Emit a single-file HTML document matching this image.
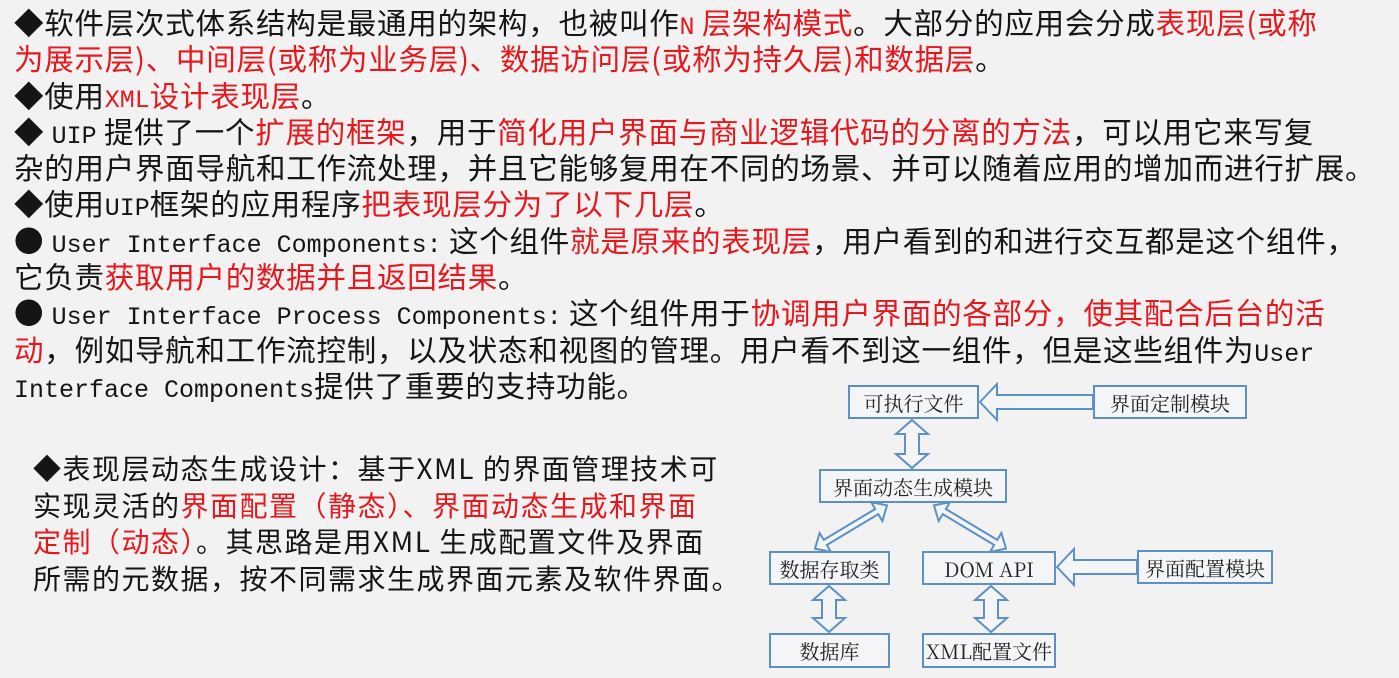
<!DOCTYPE html>
<html><head><meta charset="utf-8"><style>
body{margin:0;width:1399px;height:678px;background:#f2f2f2;overflow:hidden;position:relative;font-family:"Noto Sans CJK SC","WenQuanYi Zen Hei",sans-serif;color:#151515}
.t{position:absolute;left:14px;top:4px;font-size:29.5px;line-height:36.3px;white-space:nowrap;letter-spacing:0.75px}
.t div{height:36.3px}
.r{color:#e5181e}
.m{font-family:"Liberation Mono",monospace;font-size:25px;letter-spacing:0}
.p{position:absolute;left:33px;top:450px;font-size:28px;line-height:36.6px;white-space:nowrap;letter-spacing:1.5px}
.p div{height:36.6px}
.b{position:absolute;border:2px solid #5d90c6;box-sizing:border-box;font-family:"Noto Serif CJK SC","Liberation Serif",serif;font-size:20px;color:#222;display:flex;align-items:center;justify-content:center;background:#f4f5f7;white-space:nowrap}
</style></head><body>
<div class="t">
<div>◆软件层次式体系结构是最通用的架构，也被叫作<span class="r"><span class="m">N</span> 层架构模式</span>。大部分的应用会分成<span class="r">表现层(或称</span></div>
<div class="r">为展示层)、中间层(或称为业务层)、数据访问层(或称为持久层)和数据层<span style="color:#151515">。</span></div>
<div>◆使用<span class="r"><span class="m">XML</span>设计表现层</span>。</div>
<div>◆ <span class="m">UIP</span> 提供了一个<span class="r">扩展的框架</span>，用于<span class="r">简化用户界面与商业逻辑代码的分离的方法</span>，可以用它来写复</div>
<div>杂的用户界面导航和工作流处理，并且它能够复用在不同的场景、并可以随着应用的增加而进行扩展。</div>
<div>◆使用<span class="m">UIP</span>框架的应用程序<span class="r">把表现层分为了以下几层</span>。</div>
<div>● <span class="m">User Interface Components:</span> 这个组件<span class="r">就是原来的表现层</span>，用户看到的和进行交互都是这个组件，</div>
<div>它负责<span class="r">获取用户的数据并且返回结果</span>。</div>
<div>● <span class="m">User Interface Process Components:</span> 这个组件用于<span class="r">协调用户界面的各部分，使其配合后台的活</span></div>
<div><span class="r">动</span>，例如导航和工作流控制，以及状态和视图的管理。用户看不到这一组件，但是这些组件为<span class="m">User</span></div>
<div><span class="m">Interface Components</span>提供了重要的支持功能。</div>
</div>
<div class="p">
<div>◆表现层动态生成设计：基于XML 的界面管理技术可</div>
<div>实现灵活的<span class="r">界面配置（静态）、界面动态生成和界面</span></div>
<div><span class="r">定制（动态）</span>。其思路是用XML 生成配置文件及界面</div>
<div>所需的元数据，按不同需求生成界面元素及软件界面。</div>
</div>
<svg width="1399" height="678" style="position:absolute;left:0;top:0" fill="#f4f5f7" stroke="#5d90c6" stroke-width="2">
<polygon points="980,402 997,384 997,395 1093,395 1093,409 997,409 997,420"/>
<polygon points="1057,567 1074,549 1074,560 1137,560 1137,574 1074,574 1074,585"/>
<polygon points="912,420 928,434 919,434 919,454 928,454 912,468 896,454 905,454 905,434 896,434"/>
<polygon points="829,586 845,600 836,600 836,618 845,618 829,632 813,618 822,618 822,600 813,600"/>
<polygon points="991,586 1007,600 998,600 998,618 1007,618 991,632 975,618 984,618 984,600 975,600"/>
<g transform="translate(851,527) rotate(59)"><polygon points="0,-42 11,-30 3,-30 3,30 11,30 0,42 -11,30 -3,30 -3,-30 -11,-30"/></g>
<g transform="translate(970,527) rotate(-59)"><polygon points="0,-42 11,-30 3,-30 3,30 11,30 0,42 -11,30 -3,30 -3,-30 -11,-30"/></g>
</svg>
<div class="b" style="left:848px;top:385px;width:131px;height:34px">可执行文件</div>
<div class="b" style="left:1093px;top:385px;width:154px;height:34px">界面定制模块</div>
<div class="b" style="left:819px;top:469px;width:188px;height:34px">界面动态生成模块</div>
<div class="b" style="left:769px;top:551px;width:121px;height:34px">数据存取类</div>
<div class="b" style="left:922px;top:551px;width:134px;height:34px">DOM API</div>
<div class="b" style="left:1137px;top:550px;width:136px;height:34px">界面配置模块</div>
<div class="b" style="left:769px;top:633px;width:121px;height:35px">数据库</div>
<div class="b" style="left:922px;top:633px;width:134px;height:35px">XML配置文件</div>
</body></html>
